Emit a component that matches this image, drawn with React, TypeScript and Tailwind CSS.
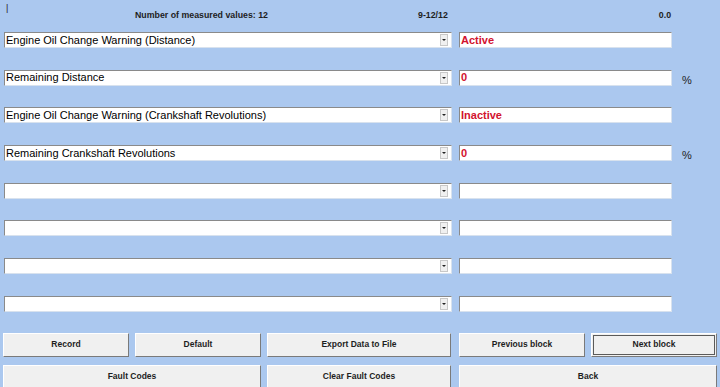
import React from 'react';

type Row = { label: string; value: string; unit?: string };

const rows: Row[] = [
  { label: 'Engine Oil Change Warning (Distance)', value: 'Active' },
  { label: 'Remaining Distance', value: '0', unit: '%' },
  { label: 'Engine Oil Change Warning (Crankshaft Revolutions)', value: 'Inactive' },
  { label: 'Remaining Crankshaft Revolutions', value: '0', unit: '%' },
  { label: '', value: '' },
  { label: '', value: '' },
  { label: '', value: '' },
  { label: '', value: '' },
];

function Btn({ label, w, focused }: { label: string; w: string; focused?: boolean }) {
  return (
    <div
      className={`${w} h-full flex items-center justify-center bg-[#f0f0f0] border border-t-white border-l-white border-b-[#7a7a7a] border-r-[#7a7a7a] text-[8.5px] font-bold text-[#1e1e1e] ${
        focused ? 'outline outline-1 outline-[#5a5a5a] -outline-offset-[3px]' : ''
      }`}
    >
      {label}
    </div>
  );
}

export default function App() {
  return (
    <div
      className="w-[720px] h-[387px] bg-[#abc8ef] overflow-hidden flex flex-col"
      style={{ fontFamily: '"Liberation Sans", Arial, sans-serif' }}
    >
      {/* header */}
      <div className="h-[32px] relative shrink-0">
        <span className="absolute left-[6px] top-[2px] text-[9px] text-[#222]">|</span>
        <div className="flex items-center h-full text-[8.8px] font-bold text-[#1e1e1e]">
          <span className="ml-[135px]">Number of measured values: 12</span>
          <span className="ml-[150px]">9-12/12</span>
          <span className="ml-[211px]">0.0</span>
        </div>
      </div>

      {/* rows */}
      <div className="flex flex-col gap-[21.7px]">
        {rows.map((r, i) => (
          <div key={i} className="flex items-start h-[16px]">
            <div className="ml-[4px] w-[448px] h-[16px] bg-white border border-t-[#8a8a8a] border-l-[#8a8a8a] border-b-[#d8e2ee] border-r-[#d8e2ee] flex items-center">
              <span className="flex-1 pl-[1px] text-[11px] text-black leading-none truncate">{r.label}</span>
              <div className="w-[8px] h-[12px] mr-[3px] bg-[#f0f0f0] border border-[#c8c8c8] flex items-center justify-center">
                <div className="w-0 h-0 border-l-[2px] border-r-[2px] border-t-[2px] border-l-transparent border-r-transparent border-t-[#222]" />
              </div>
            </div>
            <div className="ml-[7px] w-[213px] h-[16px] bg-white border border-t-[#8a8a8a] border-l-[#8a8a8a] border-b-[#d8e2ee] border-r-[#d8e2ee] flex items-center">
              <span className="pl-[1px] text-[11px] font-bold text-[#d2122e] leading-none">{r.value}</span>
            </div>
            {r.unit && (
              <span className="ml-[10px] mt-[5px] text-[11px] text-[#222] leading-none">{r.unit}</span>
            )}
          </div>
        ))}
      </div>

      {/* buttons */}
      <div className="mt-[21px] flex flex-col gap-[8px] pl-[3px]">
        <div className="flex h-[24px] gap-[6px]">
          <Btn label="Record" w="w-[126px]" />
          <Btn label="Default" w="w-[126px]" />
          <Btn label="Export Data to File" w="w-[184px]" />
          <div className="ml-[2px] flex gap-[6px] h-full">
            <Btn label="Previous block" w="w-[126px]" />
            <Btn label="Next block" w="w-[126px]" focused />
          </div>
        </div>
        <div className="flex h-[24px] gap-[6px]">
          <Btn label="Fault Codes" w="w-[258px]" />
          <Btn label="Clear Fault Codes" w="w-[184px]" />
          <div className="ml-[2px] h-full">
            <Btn label="Back" w="w-[258px]" />
          </div>
        </div>
      </div>
    </div>
  );
}
